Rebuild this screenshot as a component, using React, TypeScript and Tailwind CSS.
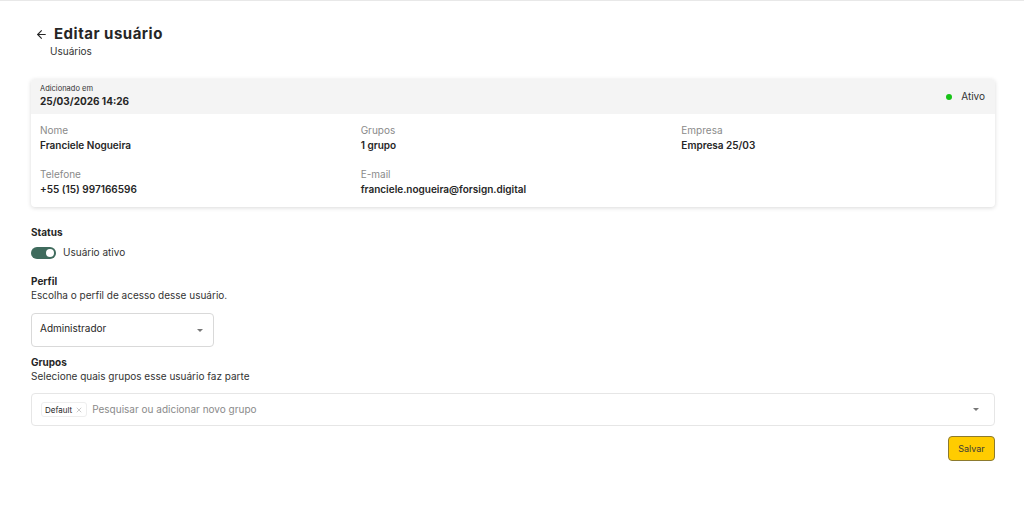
import { ArrowLeft, X } from "lucide-react";

function Field({ label, value }: { label: string; value: string }) {
  return (
    <div className="flex flex-col">
      <span className="text-[10px] leading-[14px] text-[#8a8a8a]">{label}</span>
      <span className="text-[10px] leading-[16px] font-semibold text-[#262626]">{value}</span>
    </div>
  );
}

function Caret({ small }: { small?: boolean }) {
  return small ? (
    <span className="w-0 h-0 border-l-[3px] border-r-[3px] border-t-[3px] border-l-transparent border-r-transparent border-t-[#777]" />
  ) : (
    <span className="w-0 h-0 border-l-[4px] border-r-[4px] border-t-[4px] border-l-transparent border-r-transparent border-t-[#666]" />
  );
}

export default function App() {
  return (
    <main
      className="min-h-[516px] w-full bg-white border-t border-[#e8e8e8] text-[#262626]"
      style={{ fontFamily: "Inter, 'Noto Sans', sans-serif" }}
    >
      <div className="px-[31px] pr-[29px]">
        {/* header */}
        <div className="pt-[23px] pl-[4px]">
          <div className="flex items-center gap-[6px]">
            <ArrowLeft size={13} strokeWidth={2} className="text-[#262626]" />
            <h1 className="text-[15px] leading-[20px] font-bold tracking-[0.5px]">Editar usuário</h1>
          </div>
          <p className="text-[10px] leading-[14px] text-[#333] pl-[15px]">Usuários</p>
        </div>

        {/* user card */}
        <section className="mt-[21px] rounded-[4px] bg-white shadow-[0_1px_4px_rgba(0,0,0,0.15)] overflow-hidden">
          <div className="bg-[#f4f4f4] h-[35px] px-[9px] flex items-center justify-between">
            <div className="flex flex-col">
              <span className="text-[7.5px] leading-[10px] text-[#333]">Adicionado em</span>
              <span className="text-[10px] leading-[15px] font-bold">25/03/2026 14:26</span>
            </div>
            <div className="flex items-center gap-[9px] pr-[1px]">
              <span className="w-[6px] h-[6px] rounded-full bg-[#17c317]" />
              <span className="text-[10px] text-[#333]">Ativo</span>
            </div>
          </div>
          <div className="px-[9px] pt-[9px] pb-[10px] grid grid-cols-3 gap-x-[16px] gap-y-[14px]">
            <Field label="Nome" value="Franciele Nogueira" />
            <Field label="Grupos" value="1 grupo" />
            <Field label="Empresa" value="Empresa 25/03" />
            <Field label="Telefone" value="+55 (15) 997166596" />
            <Field label="E-mail" value="franciele.nogueira@forsign.digital" />
          </div>
        </section>

        {/* status */}
        <div className="mt-[18px]">
          <h2 className="text-[10px] leading-[14px] font-bold">Status</h2>
          <div className="flex items-center gap-[7px] mt-[6px]">
            <span className="relative w-[25px] h-[12px] rounded-full bg-[#3f6b5d]">
              <span className="absolute right-[2px] top-[2px] w-[8px] h-[8px] rounded-full bg-white" />
            </span>
            <span className="text-[10px] text-[#333]">Usuário ativo</span>
          </div>
        </div>

        {/* perfil */}
        <div className="mt-[14px]">
          <h2 className="text-[10px] leading-[14px] font-bold">Perfil</h2>
          <p className="text-[10px] leading-[14px] text-[#333]">Escolha o perfil de acesso desse usuário.</p>
          <div className="mt-[11px] w-[183px] h-[34px] rounded-[4px] border border-[#d9d9d9] flex items-center justify-between pl-[8px] pr-[10px]">
            <span className="text-[10px] text-[#262626] -mt-[4px]">Administrador</span>
            <Caret small />
          </div>
        </div>

        {/* grupos */}
        <div className="mt-[8px]">
          <h2 className="text-[10px] leading-[14px] font-bold">Grupos</h2>
          <p className="text-[10px] leading-[14px] text-[#333]">Selecione quais grupos esse usuário faz parte</p>
          <div className="mt-[10px] h-[33px] rounded-[4px] border border-[#e6e6e6] flex items-center justify-between pl-[9px] pr-[15px]">
            <div className="flex items-center gap-[5px]">
              <span className="flex items-center gap-[3px] h-[15px] px-[3px] rounded-[3px] border border-[#eeeeee] text-[8px] text-[#262626]">
                Default
                <X size={8} strokeWidth={1.5} className="text-[#999]" />
              </span>
              <span className="text-[10px] text-[#8a8a8a]">Pesquisar ou adicionar novo grupo</span>
            </div>
            <Caret small />
          </div>
          <div className="flex justify-end mt-[10px]">
            <button className="w-[47px] h-[25px] rounded-[4px] bg-[#ffcc00] border border-[#8c7a2e] text-[9px] text-[#3a3a3a]">
              Salvar
            </button>
          </div>
        </div>
      </div>
    </main>
  );
}
